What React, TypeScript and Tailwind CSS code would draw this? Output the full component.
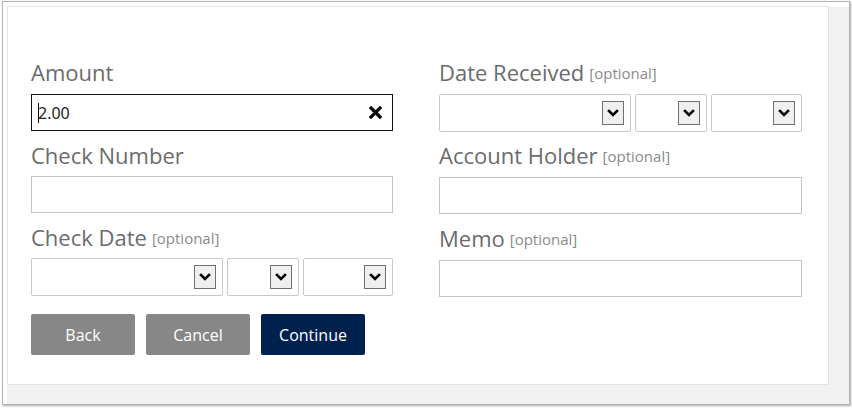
import React from 'react';

const font = { fontFamily: '"Open Sans", "Noto Sans", sans-serif' };

function Label({ text, optional }: { text: string; optional?: boolean }) {
  return (
    <div className="h-[28px] flex items-baseline text-[22px] leading-[28px] text-[#6b6b6b] whitespace-nowrap">
      <span>{text}</span>
      {optional && <span className="relative -top-[2px] ml-[5px] text-[15px] text-[#8a8a8a]">[optional]</span>}
    </div>
  );
}

function TextBox({ className = '' }: { className?: string }) {
  return <div className={`h-[37px] border border-[#c4c4c4] bg-white ${className}`} />;
}

function Select({ width }: { width: string }) {
  return (
    <div className={`${width} h-[38px] border border-[#c8c8c8] rounded-[2px] bg-white flex items-center justify-end pr-[6px]`}>
      <div className="w-[22px] h-[24px] border border-[#707070] bg-[#efefef] flex items-center justify-center">
        <svg width="12" height="8" viewBox="0 0 12 8" fill="none" stroke="#000" strokeWidth="2.6" strokeLinecap="square">
          <path d="M2 2l4 4 4-4" />
        </svg>
      </div>
    </div>
  );
}

export default function App() {
  return (
    <div className="w-[852px] h-[408px] bg-white overflow-hidden" style={font}>
      <div className="ml-[2px] mt-[1px] w-[848px] h-[404px] border border-[#b4b4b4] bg-white overflow-hidden shadow-[1px_1px_2px_rgba(0,0,0,0.35)] pl-[4px] pt-[4px]">
        <div className="w-[822px] h-[379px] border border-[#e3e3e3] bg-white shadow-[20px_19px_0_0_#f1f1f1,0_19px_0_0_#f1f1f1,20px_1px_0_0_#f1f1f1] pl-[23px] pt-[51px]">
          <div className="flex gap-[46px]">
            <div className="w-[362px] flex flex-col">
              <Label text="Amount" />
              <div className="mt-[8px] h-[37px] border-[1.5px] border-[#111] bg-white flex items-center pl-[6px] pr-[10px]">
                <span className="w-px h-[20px] bg-black" />
                <span className="text-[16px] text-[#222] -ml-px" style={{ fontFamily: '"Noto Sans", "Open Sans", sans-serif' }}>2.00</span>
                <svg className="ml-auto" width="13" height="13" viewBox="0 0 13 13" stroke="#000" strokeWidth="3.2" strokeLinecap="square">
                  <path d="M2 2l9 9M11 2l-9 9" />
                </svg>
              </div>
              <div className="mt-[10px]"><Label text="Check Number" /></div>
              <TextBox className="mt-[7px]" />
              <div className="mt-[10px]"><Label text="Check Date" optional /></div>
              <div className="mt-[7px] flex gap-[4px]">
                <Select width="w-[192px]" />
                <Select width="w-[72px]" />
                <Select width="w-[90px]" />
              </div>
              <div className="mt-[18px] flex gap-[11px] text-[16px] text-white">
                <button className="w-[104px] h-[41px] rounded-[2px] bg-[#878787]">Back</button>
                <button className="w-[104px] h-[41px] rounded-[2px] bg-[#878787]">Cancel</button>
                <button className="w-[104px] h-[41px] rounded-[2px] bg-[#00204e]">Continue</button>
              </div>
            </div>
            <div className="w-[363px] flex flex-col">
              <Label text="Date Received" optional />
              <div className="mt-[8px] flex gap-[4px]">
                <Select width="w-[192px]" />
                <Select width="w-[72px]" />
                <Select width="w-[91px]" />
              </div>
              <div className="mt-[9px]"><Label text="Account Holder" optional /></div>
              <TextBox className="mt-[8px]" />
              <div className="mt-[10px]"><Label text="Memo" optional /></div>
              <TextBox className="mt-[8px]" />
            </div>
          </div>
        </div>
      </div>
    </div>
  );
}
